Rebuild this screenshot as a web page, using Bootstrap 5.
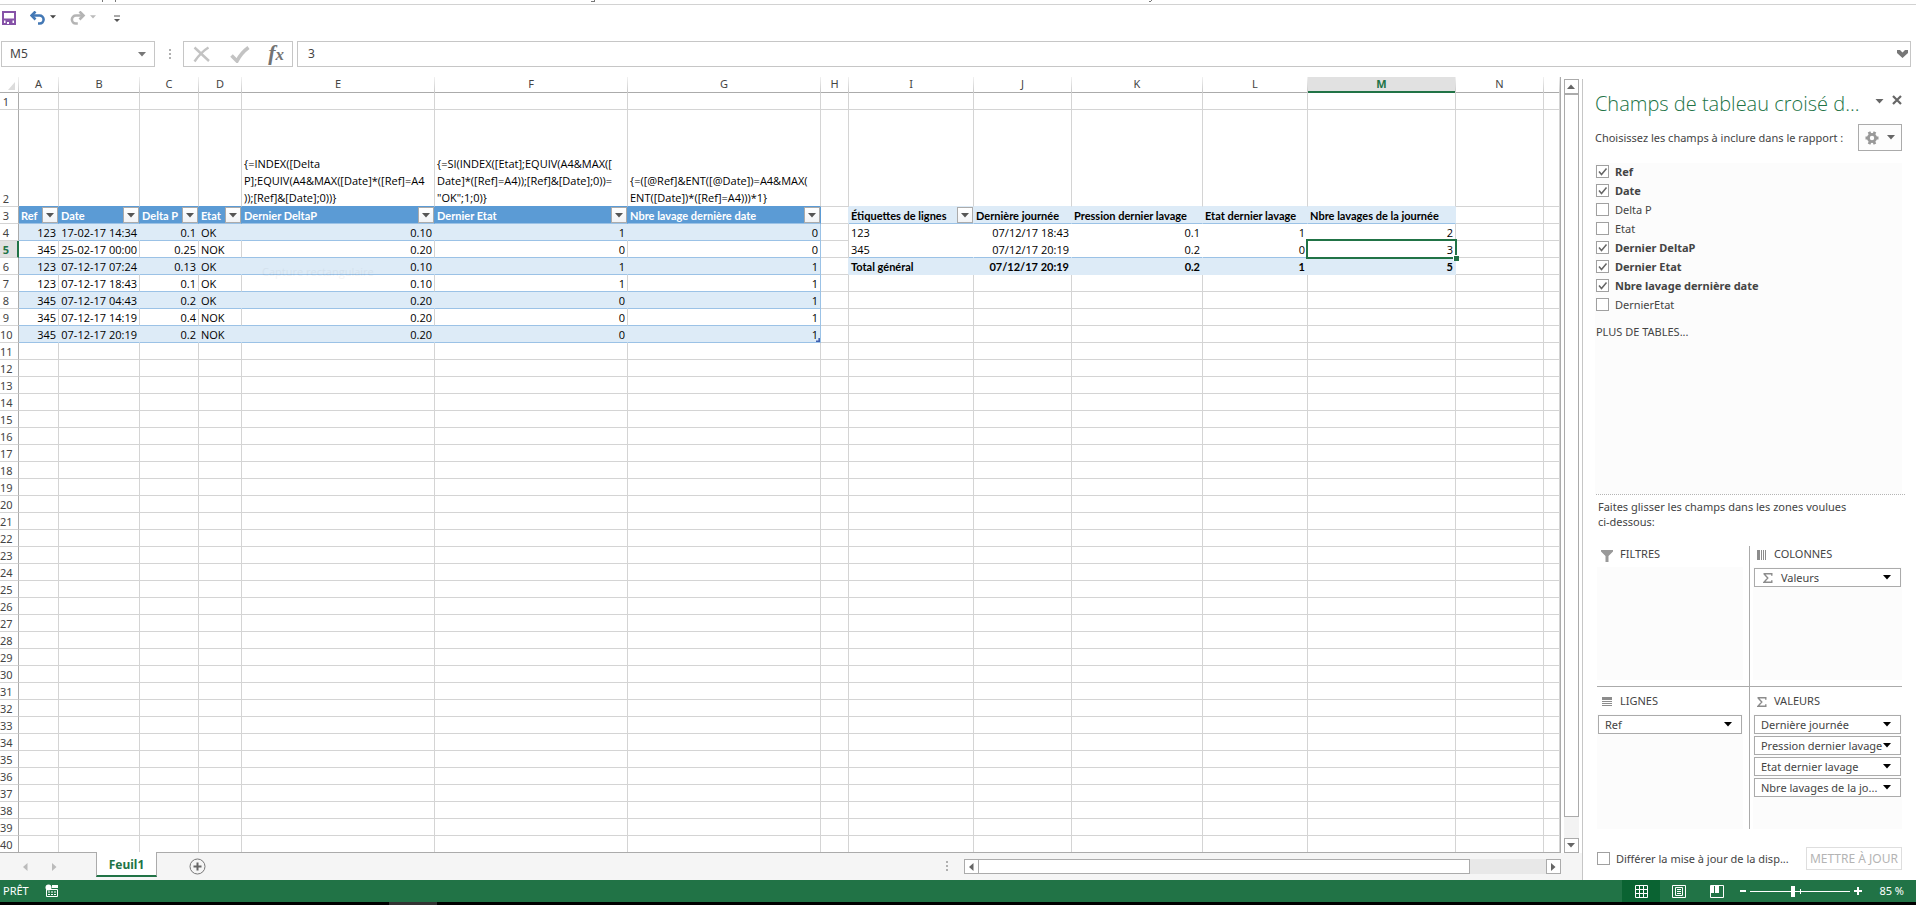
<!DOCTYPE html>
<html lang="fr">
<head>
<meta charset="utf-8">
<meta name="viewport" content="width=device-width, initial-scale=1">
<title>Classeur - Feuil1</title>
<link rel="stylesheet" href="https://cdn.jsdelivr.net/npm/bootstrap@5.3.0/dist/css/bootstrap.min.css">
<style>
:root{--green:#217346;--line:#d4d4d4;--edge:#ababab;--ink:#444;--band:#ddebf7;--blue:#5b9bd5;--blueline:#9bc2e6}
body{font:12px/16px "Noto Sans","Open Sans",sans-serif;color:var(--ink);background:#fff}
button,input{font:inherit;color:inherit}
button{background:none;border:0;padding:0}
svg{display:block}
.ribbon-foot{height:5px;border-bottom:1px solid #d2d2d2;overflow:hidden}
.quick{height:36px;padding:6px 2px 0;gap:14px}
.box{border:1px solid #c6c6c6;height:26px;background:#fff}
.namebox{width:154px}
.namebox input,.formula input{border:0;outline:0;background:none;min-width:0}
.formula{padding:0 2px 0 10px}
.bar{padding:0 5px 8px 1px}
.grip{margin:0 12px 0 14px}
.tools{width:110px}
.workspace{min-height:0}
.sheet-side{min-width:0}
.sheet{border-right:1px solid var(--edge);border-bottom:1px solid var(--edge);overflow:hidden;min-width:0}
.grid-table{table-layout:fixed;border-collapse:separate;border-spacing:0;width:100%;font-family:"Open Sans",sans-serif;font-size:11px;line-height:14px;color:#000}
.grid-table th,.grid-table td{padding:2px 2px 0;height:17px;border-right:1px solid var(--line);border-bottom:1px solid var(--line);white-space:nowrap;overflow:hidden;font-weight:400}
.grid-table thead th{height:16px;line-height:14px;padding:0 2px 2px;text-align:center;color:var(--ink);font-family:"Noto Sans",sans-serif;border-image:linear-gradient(#f4f4f4,#c6c6c6) 1;border-width:0 1px 0 0;box-shadow:inset 0 -1px var(--edge)}
.grid-table thead th.cur{background:#e1e1e1;color:var(--green);font-weight:700;box-shadow:inset 0 -2px var(--green)}
.grid-table tbody th{font-family:"Noto Sans",sans-serif;text-align:center;color:var(--ink);padding:2px 6px 0 0;border-right-color:var(--edge);vertical-align:bottom;overflow:visible}
.grid-table tbody th.cur{background:#e1e1e1;color:var(--green);font-weight:700;border-right:2px solid var(--green);padding-right:5px}
.grid-table .tall td{height:97px;line-height:17px;vertical-align:bottom}
.grid-table .n{text-align:right}
.grid-table .t{border-bottom-color:var(--blueline)}
.grid-table .band{background:var(--band);border-right-color:var(--band)}
.grid-table .tend{border-right-color:var(--blueline)}
.grid-table .thd{background:var(--blue);border-right-color:var(--blue);border-bottom-color:var(--blueline);color:#fff}
.grid-table .over{border-bottom-color:var(--blue)}
.grid-table .overp{border-bottom-color:var(--band)}
.grid-table .leadp{border-right-color:var(--band)}
.grid-table .phd{background:var(--band);border-color:var(--band);border-bottom-color:var(--blueline)}
.grid-table .ptot{background:var(--band);border-color:var(--band)}
.grid-table .open{border-right-color:#fff;border-bottom-color:#fff}
.grid-table .open.pend{border-right-color:var(--line)}
.grid-table .plast{border-bottom-color:var(--blueline)}
.grid-table .hv,.grid-table .ptot{font-family:Lato,"Open Sans",sans-serif;font-weight:700}
.grid-table .hv{padding:0 0 0 2px;line-height:18px}
.grid-table .hv>div{height:16px}
.grid-table .over-cell{overflow:visible;position:relative}
.flt{width:16px;height:16px;border:1px solid var(--edge);background:linear-gradient(#fff,#f1f3f6);flex:none}
.picked::before{content:"";position:absolute;inset:-2px;border:2px solid var(--green);z-index:1}
.picked::after{content:"";position:absolute;right:-4px;bottom:-4px;width:6px;height:6px;background:var(--green);border:solid #fff;border-width:1px 0 0 1px;z-index:2}
.corner-mark::after{content:"";position:absolute;right:0;bottom:0;width:4px;height:4px;background:#3f5fb0;clip-path:polygon(100% 0,100% 100%,0 100%,0 60%,60% 60%,60% 0)}
.ghost{position:absolute;left:20px;top:7px;opacity:.04;font-size:11px;z-index:1}
.vbar{width:15px;margin:2px 3px 0}
.vbar .cap,.hbar .cap{width:15px;height:15px;border:1px solid var(--edge);background:#fff;flex:none}
.vbar .thumb{flex:723;border:1px solid var(--edge);background:#fff}
.vbar .rest{flex:21;background:#f3f3f3}
.tabs-bar{height:27px;background:#f5f5f5}
.tab-on{width:61px;height:25px;background:#fff;border:solid var(--edge);border-width:0 1px;border-bottom:2px solid var(--green);color:var(--green);font-weight:700;margin-top:-1px;padding-top:2px}
.hbar{width:597px}
.hbar .thumb{flex:491;height:15px;border:1px solid var(--edge);border-left:0;background:#fff}
.hbar .rest{flex:76;height:15px;background:#e8e8e8}
.pane{width:334px;flex:none;border-left:1px solid #c6c6c6;margin-top:2px;padding:0 14px 0 12px;font-size:11px}
.pane-title{font:300 20px/28px "Open Sans",sans-serif;color:var(--green);white-space:nowrap;margin:11px 0 0}
.gear{width:44px;height:27px;border:1px solid var(--edge);background:#fdfdfd}
.fields{background:#fcfcfc;flex:1 1 0;padding:1px 1px 0;overflow:hidden}
.tick{appearance:none;width:13px;height:13px;border:1px solid #a0a0a0;margin:0;background:#fff;flex:none}
.tick:checked{background:#fff url("data:image/svg+xml,%3Csvg xmlns='http://www.w3.org/2000/svg' viewBox='0 0 11 11'%3E%3Cpath d='M2 5.5l2.5 3L9.5 2.5' fill='none' stroke='%23666' stroke-width='1.5'/%3E%3C/svg%3E")}
.field{height:19px;line-height:15px;gap:6px}
.field .tick{margin-top:1px}
.field:has(:checked){font-weight:700}
.more{color:var(--ink);text-decoration:none}
.hint{border-top:1px dotted #b4b4b4;margin:0 -3px 0 1px;padding:4px 48px 0 2px;line-height:15px}
.zones{margin:17px 0 0 2px;grid-template-columns:153px 1fr;grid-template-rows:141px 142px}
.zone{display:flex;flex-direction:column}
.zone-l{border-right:1px solid var(--edge);padding-right:6px}
.zone-r{padding-left:3px}
.zone-t{border-bottom:1px solid var(--edge);padding-bottom:6px}
.zone-h{height:20px;line-height:16px;gap:7px;flex:none}
.zone-t .zone-h{height:21px}
.zone-b .zone-h{height:27px;padding-top:6px}
.drop{background:#fcfcfc;flex:1;padding:1px;gap:2px}
.drop button{border:1px solid var(--edge);background:#fff;height:19px;line-height:17px;padding:0 9px 0 6px;text-align:left}
.update{border:1px solid #dedede;color:#b4b4b4;width:96px;height:23px;font-size:12px}
.status{height:22px;background:var(--green);color:#fff;font-size:11px;flex:none;padding:0 12px 0 3px}
.view-btn{width:38px;height:22px}
.view-btn.on{background:#0a6332}
.zoomer{width:100px;height:12px;position:relative}
.zoomer::after{content:"";position:absolute;left:50px;top:4px;width:1px;height:5px;background:#fff}
.zoomer input{appearance:none;width:100%;height:12px;background:linear-gradient(#fff,#fff) 0 6px/100% 1px no-repeat;display:block;margin:0}
.zoomer input::-webkit-slider-thumb{appearance:none;width:4px;height:11px;background:#fff}
.taskbar{height:3px;background:#000;flex:none;padding-left:389px}
.taskbar span{display:block;width:48px;height:3px;background:#333}
</style>
</head>
<body class="vh-100 d-flex flex-column overflow-hidden">
<svg class="d-none" aria-hidden="true">
  <symbol id="dn" viewBox="0 0 8 5"><path d="M0 0h8L4 4.5z" fill="currentColor"/></symbol>
  <symbol id="sigma" viewBox="0 0 10 10"><path d="M.5.7h8.3v2M.9.7L4.8 5 .9 9.3h7.9v-2" fill="none" stroke="#8c8c8c" stroke-width="1.4"/></symbol>
</svg>

<header class="flex-shrink-0">
  <div class="ribbon-foot" aria-hidden="true">
    <svg width="1160" height="3"><path d="M102 0h1v2h-1zM115 0h1v2h-1zM591 1h4v1h-4zM594 0h1v1h-1zM1151 0h1v1h-1zM1149 1h2v1h-2z" fill="#777"/></svg>
  </div>
  <div class="quick d-flex align-items-start">
    <button aria-label="Enregistrer"><svg width="14" height="14" viewBox="0 0 14 14"><path d="M1 1h12v12H1zM1 8.500h12" fill="none" stroke="#8653a8" stroke-width="2"/><path d="M3.500 9h7v4h-7z" fill="#8653a8"/><path d="M5 11h2v2H5z" fill="#fff"/></svg></button>
    <button class="d-flex" aria-label="Annuler"><svg width="16" height="14" viewBox="0 0 16 14"><path d="M2 4.500h7.500a4 4 0 0 1 .2 8H8" fill="none" stroke="#4378b5" stroke-width="2.600"/><path d="M5.500.5L1.500 4.500l4 4" fill="none" stroke="#4378b5" stroke-width="2.600"/></svg><svg class="ms-1 mt-1" width="6" height="4"><use href="#dn"/></svg></button>
    <button class="d-flex" aria-label="Rétablir" style="color:#bbb"><svg width="16" height="14" viewBox="0 0 16 14"><path d="M13 4.500H6a4 4 0 0 0-.2 8h2" fill="none" stroke="#b4b4b4" stroke-width="2.600"/><path d="M9.500.5l4 4-4 4" fill="none" stroke="#b4b4b4" stroke-width="2.600"/></svg><svg class="ms-1 mt-1" width="6" height="4"><use href="#dn"/></svg></button>
    <button class="mt-1 ps-1" aria-label="Personnaliser"><svg width="6" height="8" viewBox="0 0 6 8"><path d="M0 1h6" stroke="#555"/><path d="M0 4h6L3 7z" fill="#555"/></svg></button>
  </div>
  <div class="bar d-flex align-items-center">
    <div class="box namebox d-flex align-items-center px-2 flex-shrink-0">
      <input class="flex-grow-1 p-0" value="M5" aria-label="Zone Nom"><button aria-label="Noms" style="color:#777"><svg width="8" height="5"><use href="#dn"/></svg></button>
    </div>
    <svg class="grip flex-shrink-0" width="2" height="11" viewBox="0 0 2 11"><path d="M0 0h2v2H0zM0 4h2v2H0zM0 8h2v2H0z" fill="#b0b0b0"/></svg>
    <div class="box tools d-flex align-items-center justify-content-between px-2 flex-shrink-0 me-1">
      <button aria-label="Annuler la saisie"><svg width="20" height="17" viewBox="0 0 20 17"><path d="M2.500 1.500L17 15M16.500 1.500Q9 6 2.500 15.500" fill="none" stroke="#c3c3c3" stroke-width="2.400"/></svg></button>
      <button aria-label="Valider"><svg width="20" height="17" viewBox="0 0 20 17"><path d="M1.500 9.500l5.500 5.500Q11 7 18.500 1.500" fill="none" stroke="#c3c3c3" stroke-width="3.600"/></svg></button>
      <button aria-label="Insérer une fonction" style="font:italic 700 22px/22px 'Liberation Serif',serif;color:#737373">f<span style="font-size:17px">x</span></button>
    </div>
    <div class="box formula d-flex align-items-center flex-grow-1">
      <input class="flex-grow-1 p-0" value="3" aria-label="Barre de formule">
      <button aria-label="Développer"><svg width="11" height="8" viewBox="0 0 11 8"><path d="M0 0h3l2.500 2.500L8 0h3v3L5.500 8 0 3z" fill="#777"/></svg></button>
    </div>
  </div>
</header>

<main class="workspace d-flex flex-grow-1" style="margin-top:2px">
  <div class="sheet-side d-flex flex-column flex-grow-1">
    <div class="d-flex flex-grow-1 workspace">
      <div class="sheet flex-grow-1"><table class="grid-table" id="sheet"></table></div>
      <div class="vbar d-flex flex-column flex-shrink-0">
        <button class="cap d-flex align-items-center justify-content-center" aria-label="Haut"><svg width="8" height="5" style="rotate:180deg;color:#666"><use href="#dn"/></svg></button>
        <div class="thumb"></div><div class="rest"></div>
        <button class="cap d-flex align-items-center justify-content-center" aria-label="Bas"><svg width="8" height="5" style="color:#666"><use href="#dn"/></svg></button>
      </div>
    </div>
    <div class="tabs-bar d-flex flex-shrink-0">
      <div class="d-flex align-items-center" style="width:96px;gap:24px;padding-left:23px;color:#bbb">
        <button aria-label="Feuille précédente"><svg width="5" height="8"><path d="M4.500 0v8L0 4z" fill="currentColor"/></svg></button>
        <button aria-label="Feuille suivante"><svg width="5" height="8"><path d="M0 0v8l4.500-4z" fill="currentColor"/></svg></button>
      </div>
      <button class="tab-on">Feuil1</button>
      <button class="align-self-center ms-4 ps-2" aria-label="Nouvelle feuille"><svg width="17" height="17" viewBox="0 0 17 17"><circle cx="8.500" cy="8.500" r="7.500" fill="none" stroke="#777"/><path d="M8.500 4.500v8M4.500 8.500h8" stroke="#666" stroke-width="2"/></svg></button>
      <svg class="ms-auto me-3 align-self-center" width="2" height="11" viewBox="0 0 2 11"><path d="M0 0h2v2H0zM0 4h2v2H0zM0 8h2v2H0z" fill="#b0b0b0"/></svg>
      <div class="hbar d-flex align-items-center" style="margin-right:21px">
        <button class="cap d-flex align-items-center justify-content-center" aria-label="Gauche"><svg width="5" height="8"><path d="M4.500 0v8L0 4z" fill="#666"/></svg></button>
        <div class="thumb"></div><div class="rest"></div>
        <button class="cap d-flex align-items-center justify-content-center" aria-label="Droite"><svg width="5" height="8"><path d="M0 0v8l4.500-4z" fill="#666"/></svg></button>
      </div>
    </div>
  </div>

  <aside class="pane d-flex flex-column">
    <div class="d-flex align-items-start">
      <h1 class="pane-title flex-grow-1">Champs de tableau croisé d...</h1>
      <button class="mt-3 pt-1" aria-label="Options du volet" style="color:#666"><svg width="9" height="5"><use href="#dn"/></svg></button>
      <button class="mt-3 ms-2" aria-label="Fermer"><svg width="10" height="10" viewBox="0 0 10 10"><path d="M1 1l8 8M9 1L1 9" stroke="#666" stroke-width="2.200"/></svg></button>
    </div>
    <div class="d-flex align-items-center justify-content-between" style="margin:6px 0 12px">
      <span>Choisissez les champs à inclure dans le rapport :</span>
      <button class="gear d-flex align-items-center justify-content-center gap-2" aria-label="Outils"><svg width="14" height="14" viewBox="0 0 14 14"><circle cx="7" cy="7" r="3.600" fill="none" stroke="#999" stroke-width="2.800"/><path d="M4 .8l1.500 3M10 .8l-1.500 3M4 13.200l1.500-3M10 13.200l-1.500-3M.5 7h3M10.500 7h3" stroke="#999" stroke-width="2.800"/></svg><svg width="8" height="5" style="color:#666"><use href="#dn"/></svg></button>
    </div>
    <div class="fields" id="fields"></div>
    <div class="hint">Faites glisser les champs dans les zones voulues ci-dessous:</div>
    <div class="zones d-grid">
      <section class="zone zone-l zone-t">
        <div class="zone-h d-flex ps-1"><svg width="12" height="12" viewBox="0 0 12 12" class="mt-1"><path d="M0 0h12v1.500L7.500 6v6H4.500V6L0 1.500z" fill="#999"/></svg><span>FILTRES</span></div>
        <div class="drop"></div>
      </section>
      <section class="zone zone-r zone-t">
        <div class="zone-h d-flex ps-1"><svg width="10" height="10" viewBox="0 0 10 10" class="mt-1"><path d="M0 0h3v10H0zM4 0h1v10H4zM6 0h1v10H6zM8 0h1v10H8z" fill="#8c8c8c"/></svg><span>COLONNES</span></div>
        <div class="drop d-flex flex-column"><button class="d-flex align-items-center"><svg class="me-2" style="margin-left:2px" width="10" height="10"><use href="#sigma"/></svg>Valeurs<svg class="ms-auto" width="8" height="5" style="color:#000"><use href="#dn"/></svg></button></div>
      </section>
      <section class="zone zone-l zone-b">
        <div class="zone-h d-flex ps-1"><svg width="12" height="10" viewBox="0 0 12 10" class="mt-1"><path d="M1 0h10v3H1zM1 4h10v1H1zM1 6h10v1H1zM1 8h10v1H1z" fill="#8c8c8c"/></svg><span>LIGNES</span></div>
        <div class="drop d-flex flex-column" data-items="Ref"></div>
      </section>
      <section class="zone zone-r zone-b">
        <div class="zone-h d-flex ps-1"><svg width="10" height="10" class="mt-1"><use href="#sigma"/></svg><span>VALEURS</span></div>
        <div class="drop d-flex flex-column" data-items="Dernière journée|Pression dernier lavage|Etat dernier lavage|Nbre lavages de la jo..."></div>
      </section>
    </div>
    <div class="d-flex align-items-center justify-content-between" style="margin:18px 0 10px 2px">
      <label class="d-flex align-items-center" style="gap:6px"><input type="checkbox" class="tick">Différer la mise à jour de la disp...</label>
      <button class="update" disabled>METTRE À JOUR</button>
    </div>
  </aside>
</main>

<footer class="status d-flex align-items-center">
  <span>PRÊT</span>
  <button class="ms-3" aria-label="Enregistrer une macro"><svg width="14" height="14" viewBox="0 0 14 14"><path d="M1.500 5.500h11v7h-11z" fill="none" stroke="#fff"/><path d="M7 1h6v3H7z" fill="#fff"/><circle cx="3.500" cy="3.500" r="3" fill="#fff"/><path d="M3 8h8.500M3 10.500h8.500" stroke="#fff" stroke-dasharray="2 1"/></svg></button>
  <button class="view-btn on ms-auto d-flex align-items-center justify-content-center" aria-label="Normal"><svg width="13" height="13" viewBox="0 0 13 13"><path d="M.5.5h12v12H.5zM4.500 0v13M8.500 0v13M0 4.500h13M0 8.500h13" fill="none" stroke="#fff"/></svg></button>
  <button class="view-btn d-flex align-items-center justify-content-center" aria-label="Mise en page"><svg width="14" height="13" viewBox="0 0 14 13"><path d="M.5.5h13v12H.5zM3.500 2.500h7v8h-7zM5 4.500h4M5 6.500h4M5 8.500h4" fill="none" stroke="#fff"/></svg></button>
  <button class="view-btn d-flex align-items-center justify-content-center" aria-label="Sauts de page"><svg width="14" height="13" viewBox="0 0 14 13"><path d="M.5.5h13v12H.5z" fill="none" stroke="#fff"/><path d="M1 1h3v7H1zM5 1h4v7H5z" fill="#fff"/></svg></button>
  <button class="ms-1" aria-label="Zoom arrière"><svg width="7" height="2"><path d="M0 0h6v2H0z" fill="#fff"/></svg></button>
  <label class="zoomer" style="margin:0 4px 0 3px"><input type="range" aria-label="Zoom" min="0" max="100" value="42"></label>
  <button aria-label="Zoom avant"><svg width="9" height="9"><path d="M3 0h2v3h3v2H5v3H3V5H0V3h3z" fill="#fff"/></svg></button>
  <span class="ms-3">85 %</span>
</footer>
<div class="taskbar"><span></span></div>

<script src="https://cdn.jsdelivr.net/npm/bootstrap@5.3.0/dist/js/bootstrap.bundle.min.js"></script>
<script>
const cols = {A:40,B:81,C:59,D:43,E:193,F:193,G:193,H:28,I:125,J:98,K:131,L:105,M:148,N:88,O:null};
const names = Object.keys(cols);
const arrow = '<svg width="8" height="5" style="color:#555"><use href="#dn"/></svg>';
const filter = '<button class="flt d-flex align-items-center justify-content-center" aria-label="Filtrer">' + arrow + '</button>';
const heads = ['Ref','Date','Delta P','Etat','Dernier DeltaP','Dernier Etat','Nbre lavage dernière date'];
const rows = [
  ['123','17-02-17 14:34','0.1','OK','0.10','1','0'],
  ['345','25-02-17 00:00','0.25','NOK','0.20','0','0'],
  ['123','07-12-17 07:24','0.13','OK','0.10','1','1'],
  ['123','07-12-17 18:43','0.1','OK','0.10','1','1'],
  ['345','07-12-17 04:43','0.2','OK','0.20','0','1'],
  ['345','07-12-17 14:19','0.4','NOK','0.20','0','1'],
  ['345','07-12-17 20:19','0.2','NOK','0.20','0','1']];
const pivot = {
  3:['Étiquettes de lignes','Dernière journée','Pression dernier lavage','Etat dernier lavage','Nbre lavages de la journée'],
  4:['123','07/12/17 18:43','0.1','1','2'],
  5:['345','07/12/17 20:19','0.2','0','3'],
  6:['Total général','07/12/17 20:19','0.2','1','5']};
const formulas = {
  E:'{=INDEX([Delta<br>P];EQUIV(A4&amp;MAX([Date]*([Ref]=A4<br>));[Ref]&amp;[Date];0))}',
  F:'{=SI(INDEX([Etat];EQUIV(A4&amp;MAX([<br>Date]*([Ref]=A4));[Ref]&amp;[Date];0))=<br>"OK";1;0)}',
  G:'{=([@Ref]&amp;ENT([@Date])=A4&amp;MAX(<br>ENT([Date])*([Ref]=A4)))*1}'};

function cell(r, c) {
  const i = names.indexOf(c), p = i - 8;
  let cls = '', txt = '';
  if (r === 2) {
    txt = formulas[c] || '';
    if (i < 7) cls = 'over'; else if (p >= 0 && p < 5) cls = 'overp';
  } else if (i < 7 && r === 3) {
    cls = 'thd hv';
    txt = '<div class="d-flex justify-content-between">' + heads[i] + filter + '</div>';
  } else if (i < 7 && r > 3 && r < 11) {
    cls = 't' + (r % 2 ? '' : ' band') + (i === 3 ? '' : ' n') + (i === 6 ? ' tend' : '');
    txt = rows[r - 4][i];
    if (i === 6 && r === 10) cls += ' over-cell corner-mark';
    if (i === 4 && r === 6) { cls += ' over-cell'; txt += '<span class="ghost" aria-hidden="true">Capture rectangulaire</span>'; }
  } else if (c === 'H' && (r === 3 || r === 6)) {
    cls = 'leadp';
  } else if (p >= 0 && p < 5 && pivot[r]) {
    txt = pivot[r][p];
    cls = r === 3 ? 'phd hv' : r === 6 ? 'ptot' : 'open' + (r === 5 ? ' plast' : '') + (p === 4 ? ' pend' : '');
    if (r > 3 && p) cls += ' n';
    if (r === 3) txt = '<div class="d-flex justify-content-between">' + txt + (p ? '' : filter) + '</div>';
    if (c === 'M' && r === 5) cls += ' over-cell picked';
  }
  return '<td class="' + cls + '">' + txt + '</td>';
}
let html = '<colgroup><col style="width:19px">' + names.map(n => '<col' + (cols[n] ? ' style="width:' + cols[n] + 'px"' : '') + '>').join('') + '</colgroup>';
html += '<thead><tr><th><svg width="7" height="8" style="margin:3px 0 0 6px"><path d="M7 0v8H0z" fill="#dcdcdc"/></svg></th>' + names.map(n => '<th scope="col"' + (n === 'M' ? ' class="cur"' : '') + '>' + (n === 'O' ? '' : n) + '</th>').join('') + '</tr></thead><tbody>';
for (let r = 1; r <= 40; r++) {
  html += '<tr' + (r === 2 ? ' class="tall"' : '') + '><th scope="row"' + (r === 5 ? ' class="cur"' : '') + '>' + r + '</th>' + names.map(n => cell(r, n)).join('') + '</tr>';
}
document.getElementById('sheet').innerHTML = html + '</tbody>';

document.getElementById('fields').innerHTML = [['Ref',1],['Date',1],['Delta P',0],['Etat',0],['Dernier DeltaP',1],['Dernier Etat',1],['Nbre lavage dernière date',1],['DernierEtat',0]]
  .map(([t, on]) => '<label class="field d-flex"><input type="checkbox" class="tick"' + (on ? ' checked' : '') + '>' + t + '</label>').join('')
  + '<a href="#" class="more d-block mt-1 pt-1">PLUS DE TABLES...</a>';
document.querySelectorAll('[data-items]').forEach(el => {
  el.innerHTML = el.dataset.items.split('|').map(t => '<button class="d-flex align-items-center justify-content-between text-nowrap">' + t + '<svg width="8" height="5" style="color:#000"><use href="#dn"/></svg></button>').join('');
});
</script>
</body>
</html>
